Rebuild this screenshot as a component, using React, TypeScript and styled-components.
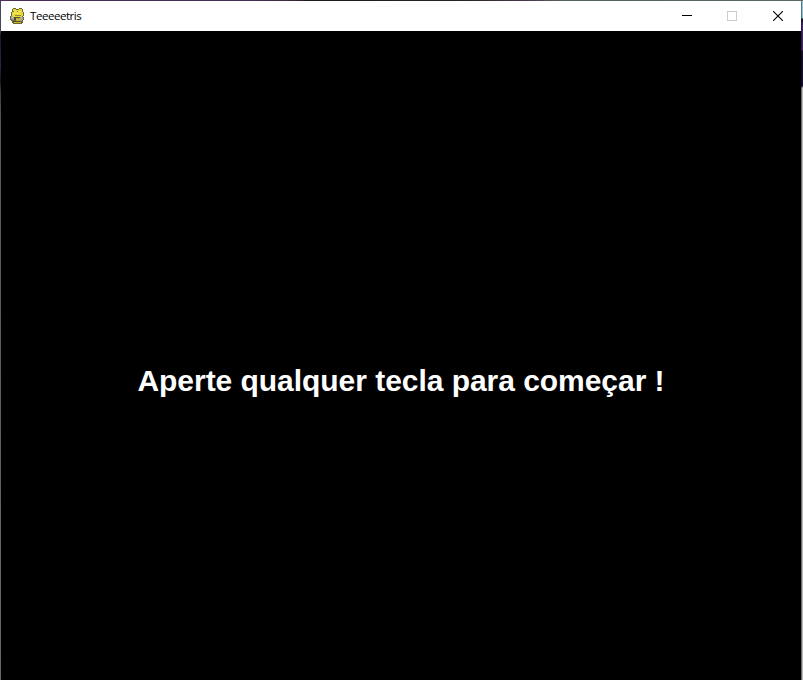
import React from "react";
import styled, { createGlobalStyle } from "styled-components";

const GlobalStyle = createGlobalStyle`
  html, body { margin: 0; padding: 0; background: #000; overflow: hidden; }
  *, *::before, *::after { box-sizing: border-box; }
`;

const Desktop = styled.div`
  display: grid;
  grid-template-columns: 1px 800px 1px 1px;
  grid-template-rows: 1px 679px;
  width: 803px;
  height: 680px;
  overflow: hidden;
`;

const TopEdge = styled.div`
  grid-column: 1 / 5;
  background: linear-gradient(90deg, #4b2d55 0, #45305a 240px, #3b2b3c 290px, #1d1a1c 310px, #262226 460px, #4a3a4c 530px, #56605f 560px, #5c6866 803px);
`;

const LeftEdge = styled.div`
  background: linear-gradient(180deg, #4a4260 0, #454a58 30px, #16182a 34px, #262a4c 65px, #14151c 80px, #3a3f36 90px, #565956 120px, #666 100%);
`;

const RightEdge = styled.div`
  background: linear-gradient(180deg, #567480 0, #567480 17px, #15101f 18px, #2b1b43 24px, #2b1b43 49px, #100a20 50px, #100a20 85px, #6c6c6c 87px);
`;

const Backdrop = styled.div`
  background: linear-gradient(180deg, #9cc9d3 0, #8bbcca 17px, #170e26 18px, #43266c 24px, #3f2466 49px, #150b2e 50px, #190f35 85px, #bdbdbd 87px);
`;

const Window = styled.main`
  display: flex;
  flex-direction: column;
  min-width: 0;
  background: #000;
`;

const TitleBar = styled.header`
  display: flex;
  align-items: center;
  flex: 0 0 30px;
  height: 30px;
  padding-left: 8px;
  background: #fff;
`;

const Title = styled.h1`
  flex: 1;
  margin: 0 0 0 5px;
  padding-bottom: 1px;
  color: #000;
  font: 400 11.5px/16px "Open Sans", "Noto Sans", sans-serif;
  letter-spacing: -0.45px;
`;

const Controls = styled.div`
  display: flex;
  height: 30px;
`;

const ControlButton = styled.button<{ $color: string; $width: number }>`
  display: flex;
  align-items: center;
  justify-content: center;
  width: ${({ $width }) => $width}px;
  height: 30px;
  padding: 0 0 1px;
  border: 0;
  background: transparent;
  color: ${({ $color }) => $color};
`;

const Icon = styled.svg`
  display: block;
  flex: none;
`;

const Screen = styled.section`
  display: flex;
  justify-content: center;
  flex: 1;
  padding-top: 332px;
  background: #000;
`;

const Prompt = styled.p`
  margin: 0;
  color: #fff;
  font: 700 30px/36px "Liberation Sans", Arial, sans-serif;
  letter-spacing: -0.04px;
  white-space: pre;
`;

const SnakeIcon = () => (
  <Icon width="16" height="18" viewBox="0 0 16 18">
    <path fill="#6b682c" d="M4 1h3v1h3V1h3v1h1v3h1v4h-1v1h1v3h-1v3h-1v1H4v-1H3v-2H2v-1H1V9h1V5h1V2h1z" />
    <path fill="#e6d936" d="M4 2h3v1h3V2h3v3h1v4h-1v1H4V9H3V5h1z" />
    <path fill="#f3ea6c" d="M5 4h2v1H5zM9 4h3v1H9zM4 6h7v1H4z" />
    <path fill="#8d8538" d="M4 4h1v1H4zM8 4h1v1H8zM6 8h6v1H6z" />
    <path fill="#a3a297" d="M2 9h2v1h1v3H3v-1H2zM11 10h3v3h-1v1h-2z" />
    <path fill="#4f4e3a" d="M5 10h2v3H5zM7 10h4v1H7zM4 14h7v1H4z" />
    <path fill="#c4b432" d="M7 11h4v3H7zM5 15h7v1H5z" />
    <path fill="#cfcdc2" d="M3 10h1v1H3zM12 11h1v1h-1z" />
  </Icon>
);

export default function App() {
  return (
    <>
      <GlobalStyle />
      <Desktop>
        <TopEdge />
        <LeftEdge />
        <Window>
          <TitleBar>
            <SnakeIcon />
            <Title>Teeeeetris</Title>
            <Controls>
              <ControlButton $color="#000" $width={45} aria-label="Minimizar">
                <Icon width="10" height="10" viewBox="0 0 10 10" shapeRendering="crispEdges">
                  <path fill="currentColor" d="M0 4h10v1H0z" />
                </Icon>
              </ControlButton>
              <ControlButton $color="#ccc" $width={46} aria-label="Maximizar" disabled>
                <Icon width="10" height="10" viewBox="0 0 10 10" shapeRendering="crispEdges">
                  <path fill="none" stroke="currentColor" d="M.5.5h9v9h-9z" />
                </Icon>
              </ControlButton>
              <ControlButton $color="#000" $width={46} aria-label="Fechar">
                <Icon width="10" height="10" viewBox="0 0 10 10">
                  <path fill="none" stroke="currentColor" strokeWidth="1.1" d="M0 0l10 10M10 0L0 10" />
                </Icon>
              </ControlButton>
            </Controls>
          </TitleBar>
          <Screen>
            <Prompt>Aperte qualquer tecla para começar !</Prompt>
          </Screen>
        </Window>
        <RightEdge />
        <Backdrop />
      </Desktop>
    </>
  );
}
